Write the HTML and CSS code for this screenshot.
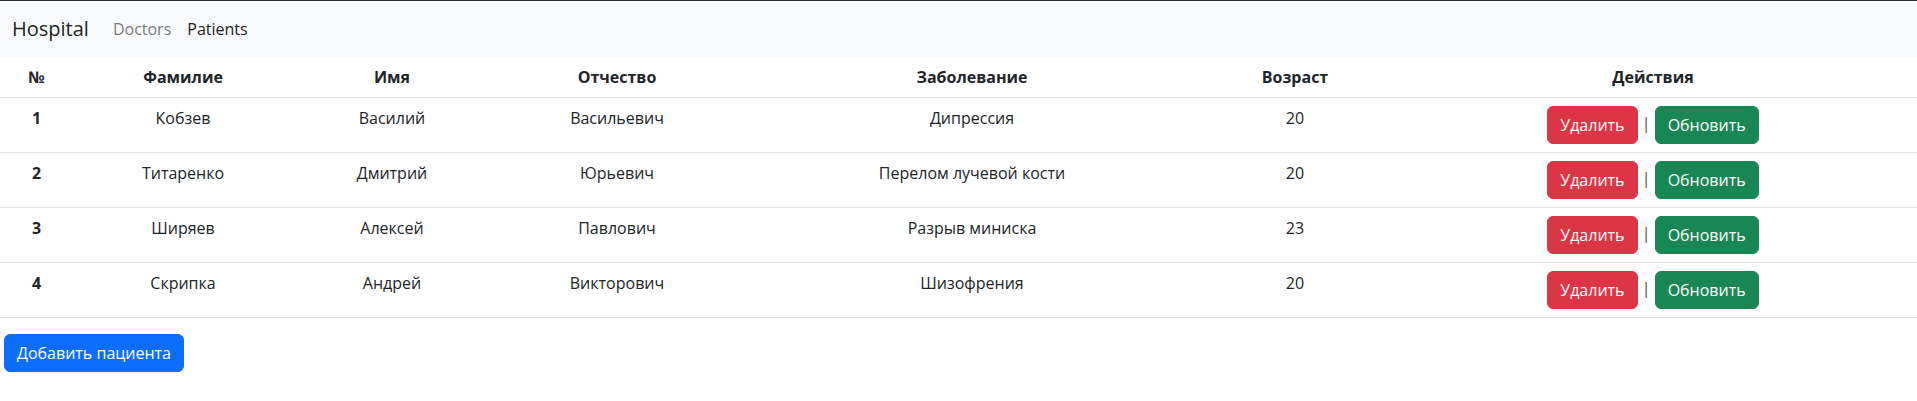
FILE: index.html
```html
<!DOCTYPE html>
<html lang="ru">
<head>
<meta charset="utf-8">
<title>Hospital</title>
<link rel="stylesheet" href="styles.css">
</head>
<body>
<nav class="navbar">
  <a class="brand" href="#">Hospital</a>
  <ul class="nav">
    <li><a class="nav-link" href="#">Doctors</a></li>
    <li><a class="nav-link active" href="#">Patients</a></li>
  </ul>
</nav>
<main>
  <table class="table">
    <thead>
      <tr>
        <th class="c-num">№</th>
        <th class="c-last">Фамилие</th>
        <th class="c-first">Имя</th>
        <th class="c-middle">Отчество</th>
        <th class="c-disease">Заболевание</th>
        <th class="c-age">Возраст</th>
        <th class="c-actions">Действия</th>
      </tr>
    </thead>
    <tbody>
      <tr>
        <th>1</th><td>Кобзев</td><td>Василий</td><td>Васильевич</td><td>Дипрессия</td><td>20</td>
        <td><button class="btn btn-danger">Удалить</button> <span class="sep">|</span> <button class="btn btn-success">Обновить</button></td>
      </tr>
      <tr>
        <th>2</th><td>Титаренко</td><td>Дмитрий</td><td>Юрьевич</td><td>Перелом лучевой кости</td><td>20</td>
        <td><button class="btn btn-danger">Удалить</button> <span class="sep">|</span> <button class="btn btn-success">Обновить</button></td>
      </tr>
      <tr>
        <th>3</th><td>Ширяев</td><td>Алексей</td><td>Павлович</td><td>Разрыв миниска</td><td>23</td>
        <td><button class="btn btn-danger">Удалить</button> <span class="sep">|</span> <button class="btn btn-success">Обновить</button></td>
      </tr>
      <tr>
        <th>4</th><td>Скрипка</td><td>Андрей</td><td>Викторович</td><td>Шизофрения</td><td>20</td>
        <td><button class="btn btn-danger">Удалить</button> <span class="sep">|</span> <button class="btn btn-success">Обновить</button></td>
      </tr>
    </tbody>
  </table>
  <button class="btn btn-primary add">Добавить пациента</button>
</main>
</body>
</html>
```
FILE: styles.css
```css
* { box-sizing: border-box; }
html, body { margin: 0; }
body {
  font-family: "Open Sans", "Noto Sans", "Liberation Sans", sans-serif;
  font-size: 16px;
  line-height: 24px;
  color: #212529;
  background: #fff;
  border-top: 1px solid #2b3038;
}
.navbar {
  display: flex;
  align-items: center;
  background: #f8f9fa;
  padding: 8px 12px;
}
.brand {
  font-size: 20px;
  line-height: 30px;
  padding: 5px 0;
  margin-right: 16px;
  color: rgba(0,0,0,.9);
  text-decoration: none;
}
.nav {
  display: flex;
  list-style: none;
  margin: 0;
  padding: 0;
}
.nav-link {
  display: block;
  padding: 8px;
  color: rgba(0,0,0,.55);
  text-decoration: none;
}
.nav-link.active { color: rgba(0,0,0,.9); }
.table {
  width: 100%;
  table-layout: fixed;
  border-collapse: collapse;
  margin-bottom: 16px;
  text-align: center;
  vertical-align: top;
}
.table th, .table td {
  padding: 8px;
  border-bottom: 1px solid #dee2e6;
  vertical-align: top;
}
.table th { font-weight: 700; }
.c-num { width: 73px; }
.c-last { width: 220px; }
.c-first { width: 198px; }
.c-middle { width: 252px; }
.c-disease { width: 458px; }
.c-age { width: 188px; }
.c-actions { width: auto; }
.btn {
  display: inline-block;
  font-family: inherit;
  font-size: 16px;
  line-height: 24px;
  padding: 6px 12px;
  border: 1px solid transparent;
  border-radius: 6px;
  color: #fff;
  cursor: pointer;
  vertical-align: middle;
}
.btn-danger { background: #dc3545; border-color: #dc3545; }
.btn-success { background: #198754; border-color: #198754; }
.btn-primary { background: #0d6efd; border-color: #0d6efd; }
.sep { color: #5a4632; }
.add { margin-left: 4px; }
```
